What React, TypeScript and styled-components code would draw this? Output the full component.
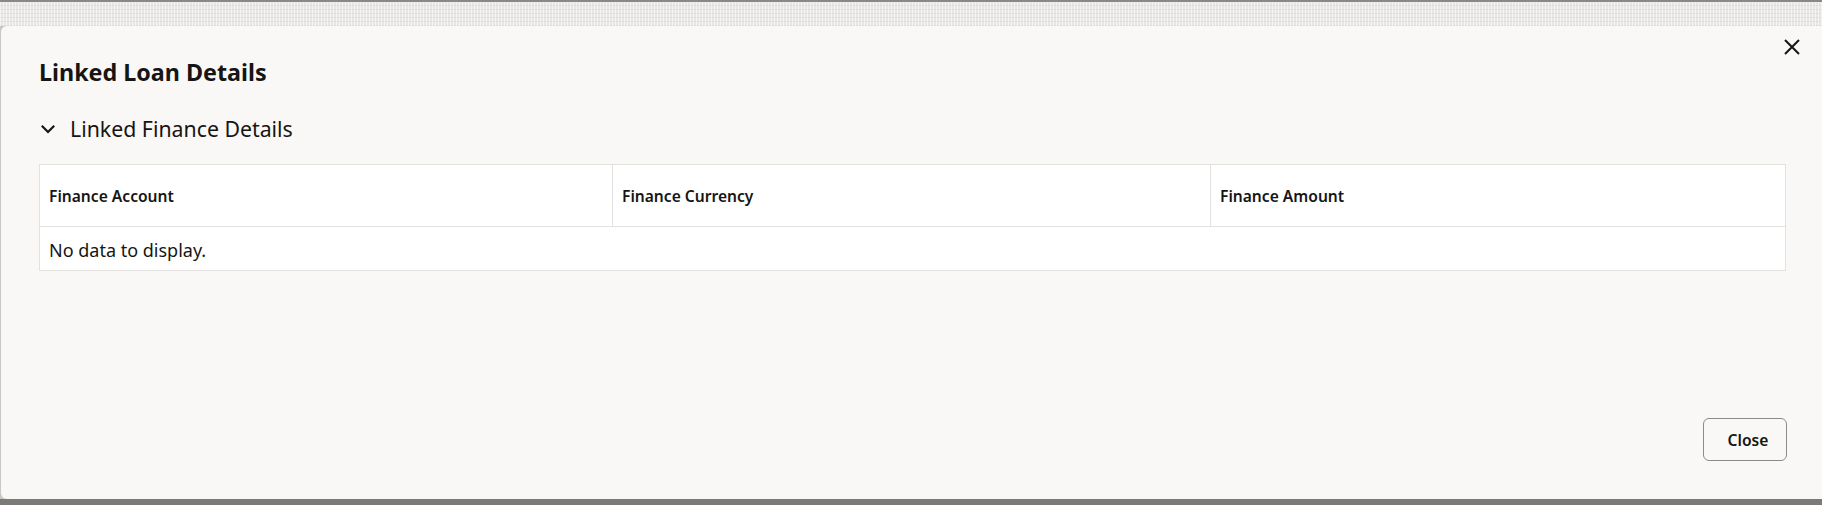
import styled, { createGlobalStyle } from "styled-components";

const GlobalStyle = createGlobalStyle`
    html, body {
        margin: 0;
        padding: 0;
    }
    body {
        font-family: "Noto Sans", "Open Sans", Arial, sans-serif;
        color: #161513;
        background: #7f7f7f;
    }
`;

const Page = styled.div`
    width: 1822px;
    height: 505px;
    display: flex;
    flex-direction: column;
    overflow: hidden;
`;

const TopStrip = styled.div`
    height: 2px;
    background: #8a8988;
`;

const Backdrop = styled.div`
    height: 24px;
    background-color: #e8e7e5;
    background-image:
        repeating-linear-gradient(90deg, rgba(255, 255, 255, 0.55) 0 1px, transparent 1px 3px),
        repeating-linear-gradient(0deg, rgba(200, 198, 196, 0.35) 0 1px, transparent 1px 4px);
`;

const DialogRow = styled.div`
    flex: 1;
    display: flex;
    background: #c9c8c6;
`;

const Dialog = styled.section`
    position: relative;
    flex: 1;
    margin-left: 1px;
    display: flex;
    flex-direction: column;
    background: #f9f8f6;
    border-radius: 6px 0 0 6px;
    padding: 30px 36px 38px 38px;
    box-sizing: border-box;
`;

const BottomStrip = styled.div`
    height: 6px;
    background: #7b7a79;
`;

const Title = styled.h1`
    margin: 0;
    font-size: 23.3px;
    line-height: 32px;
    font-weight: 700;
`;

const CloseIconButton = styled.button`
    position: absolute;
    top: 9px;
    right: 18px;
    width: 24px;
    height: 24px;
    padding: 0;
    border: none;
    background: transparent;
    display: flex;
    align-items: center;
    justify-content: center;
    cursor: pointer;
`;

const SectionHeader = styled.div`
    margin-top: 27px;
    display: flex;
    align-items: center;
    gap: 14px;
    cursor: pointer;
`;

const Chevron = styled.svg`
    width: 16px;
    height: 16px;
    flex: none;
    margin-left: 1px;
`;

const SectionTitle = styled.h2`
    margin: 0;
    font-size: 21.3px;
    line-height: 28px;
    font-weight: 400;
`;

const Table = styled.div`
    margin-top: 21px;
    border: 1px solid #e4e2df;
    background: #ffffff;
    display: grid;
    grid-template-columns: 572px 598px 1fr;
`;

const HeaderCell = styled.div<{ $divider?: boolean }>`
    height: 61px;
    display: flex;
    align-items: center;
    padding: 0 9px;
    font-size: 15.6px;
    font-weight: 600;
    line-height: 20px;
    border-bottom: 1px solid #e4e2df;
    border-left: ${(props) => (props.$divider ? "1px solid #e4e2df" : "none")};
`;

const EmptyCell = styled.div`
    grid-column: 1 / -1;
    padding: 11px 9px 8px;
    font-size: 18px;
    line-height: 24px;
    font-weight: 400;
`;

const Footer = styled.div`
    margin-top: auto;
    margin-right: -1px;
    display: flex;
    justify-content: flex-end;
`;

const Button = styled.button`
    width: 84px;
    height: 43px;
    border: 1px solid #8d8b89;
    border-radius: 6px;
    background: transparent;
    font-family: "Noto Sans", "Open Sans", Arial, sans-serif;
    font-size: 15.6px;
    font-weight: 600;
    color: #161513;
    padding: 0 0 0 6px;
    cursor: pointer;
`;

const columns = ["Finance Account", "Finance Currency", "Finance Amount"];

const App = () => {
    return (
        <>
            <GlobalStyle />
            <Page>
                <TopStrip />
                <Backdrop />
                <DialogRow>
                    <Dialog>
                        <CloseIconButton aria-label="Close">
                            <svg width="16" height="16" viewBox="0 0 16 16">
                                <path d="M1 1 L15 15 M15 1 L1 15" stroke="#161513" strokeWidth="2" fill="none" />
                            </svg>
                        </CloseIconButton>
                        <Title>Linked Loan Details</Title>
                        <SectionHeader>
                            <Chevron viewBox="0 0 16 16">
                                <path d="M1.8 4.8 L8 11 L14.2 4.8" stroke="#161513" strokeWidth="2.2" fill="none" />
                            </Chevron>
                            <SectionTitle>Linked Finance Details</SectionTitle>
                        </SectionHeader>
                        <Table>
                            {columns.map((col, i) => (
                                <HeaderCell key={col} $divider={i > 0}>
                                    {col}
                                </HeaderCell>
                            ))}
                            <EmptyCell>No data to display.</EmptyCell>
                        </Table>
                        <Footer>
                            <Button>Close</Button>
                        </Footer>
                    </Dialog>
                </DialogRow>
                <BottomStrip />
            </Page>
        </>
    );
};

export default App;
